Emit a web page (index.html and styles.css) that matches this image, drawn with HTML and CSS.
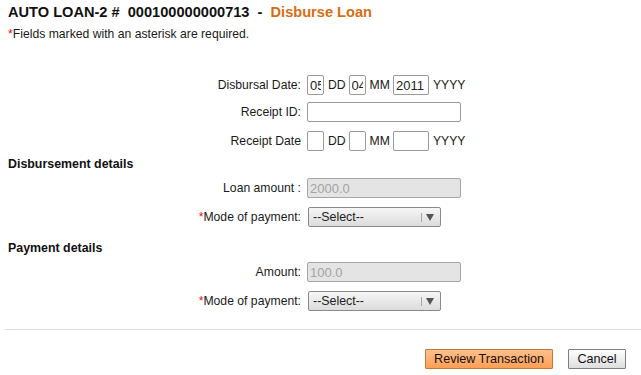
FILE: index.html
```html
<!DOCTYPE html>
<html lang="en">
<head>
    <meta charset="UTF-8">
    <title>Disburse Loan</title>
    <link rel="stylesheet" href="styles.css">
</head>
<body>

    <div class="container">
        <h1>AUTO LOAN-2 #&nbsp; 000100000000713&nbsp; -&nbsp; <span class="title-action">Disburse Loan</span></h1>
        <p class="note"><span class="req">*</span>Fields marked with an asterisk are required.</p>

        <div class="form-row first">
            <label>Disbursal Date:</label>
            <input type="text" class="date-day" value="05">
            <span class="unit">DD</span>
            <input type="text" class="date-day" value="04">
            <span class="unit">MM</span>
            <input type="text" class="date-year" value="2011">
            <span class="unit">YYYY</span>
        </div>
        <div class="form-row gap-7">
            <label for="receipt_id">Receipt ID:</label>
            <input type="text" id="receipt_id" class="wide">
        </div>
        <div class="form-row gap-9">
            <label>Receipt Date</label>
            <input type="text" class="date-day">
            <span class="unit">DD</span>
            <input type="text" class="date-day">
            <span class="unit">MM</span>
            <input type="text" class="date-year">
            <span class="unit">YYYY</span>
        </div>

        <h2 class="section first-section">Disbursement details</h2>
        <div class="form-row gap-7">
            <label>Loan amount :</label>
            <input type="text" class="wide" value="2000.0" disabled>
        </div>
        <div class="form-row gap-9">
            <label><span class="req">*</span>Mode of payment:</label>
            <span class="select-wrap">
                <select>
                    <option>--Select--</option>
                </select>
            </span>
        </div>

        <h2 class="section">Payment details</h2>
        <div class="form-row gap-7">
            <label>Amount:</label>
            <input type="text" class="wide" value="100.0" disabled>
        </div>
        <div class="form-row gap-9">
            <label><span class="req">*</span>Mode of payment:</label>
            <span class="select-wrap">
                <select>
                    <option>--Select--</option>
                </select>
            </span>
        </div>

        <hr class="divider">

        <div class="actions">
            <button class="btn-primary">Review Transaction</button>
            <button class="btn-cancel">Cancel</button>
        </div>
    </div>

</body>
</html>
```

FILE: styles.css
```css
body {
    font-family: "Liberation Sans", Arial, sans-serif;
    font-size: 12.2px;
    color: #1a1a1a;
    margin: 0;
    background: #fff;
}

.container {
    padding: 0 8px;
}

h1 {
    font-size: 14.6px;
    line-height: 18px;
    margin: 3px 0 0;
    color: #111;
}

.title-action {
    color: #d66d10;
}

.note {
    margin: 6px 0 0;
    line-height: 14px;
}

.req {
    color: #e4141b;
}

.form-row {
    display: flex;
    align-items: center;
    height: 20px;
}

.form-row.first {
    margin-top: 34px;
}

.gap-7 {
    margin-top: 7px;
}

.gap-9 {
    margin-top: 9px;
}

.form-row label {
    width: 293px;
    padding-right: 6px;
    text-align: right;
    flex-shrink: 0;
}

input[type="text"] {
    box-sizing: border-box;
    height: 20px;
    border: 1px solid #9a9a9a;
    border-radius: 2px;
    font-family: "Liberation Sans", Arial, sans-serif;
    font-size: 13px;
    padding: 0 2px;
    color: #222;
    background: #fff;
    margin: 0;
}

input.date-day {
    width: 17px;
}

input.date-year {
    width: 36px;
}

input.wide {
    width: 154px;
}

input[disabled] {
    background: #e4e4e4;
    border-color: #a6a6a6;
    color: #a3a3a3;
}

.unit {
    margin: 0 3px 0 4px;
}

.section {
    font-size: 12.4px;
    line-height: 14px;
    margin: 0;
    margin-top: 14px;
    color: #111;
}

.first-section {
    margin-top: 6px;
}

.select-wrap {
    position: relative;
    display: inline-block;
    margin-left: 1px;
}

.select-wrap select {
    appearance: none;
    -webkit-appearance: none;
    box-sizing: border-box;
    width: 133px;
    height: 20px;
    border: 1px solid #8a8a8a;
    border-radius: 2px;
    background: linear-gradient(#f6f6f6, #dcdcdc);
    font-family: "Liberation Sans", Arial, sans-serif;
    font-size: 12.4px;
    color: #222;
    padding: 0 0 0 4px;
    margin: 0;
}

.select-wrap::before {
    content: "";
    position: absolute;
    right: 19px;
    top: 6px;
    width: 1px;
    height: 9px;
    background: #a8a8a8;
}

.select-wrap::after {
    content: "";
    position: absolute;
    right: 7px;
    top: 7px;
    border-left: 4px solid transparent;
    border-right: 4px solid transparent;
    border-top: 7px solid #555;
}

.divider {
    border: none;
    border-top: 1px solid #d6dce2;
    margin: 18px -8px 0 -3px;
}

.actions {
    display: flex;
    justify-content: flex-end;
    gap: 15px;
    margin-top: 19px;
    padding-right: 7px;
}

button {
    box-sizing: border-box;
    height: 20px;
    font-family: "Liberation Sans", Arial, sans-serif;
    font-size: 12.6px;
    color: #111;
    padding: 0;
    cursor: pointer;
    border-radius: 1px;
}

.btn-primary {
    width: 128px;
    background: linear-gradient(#ffc08c, #ff9f55);
    border: 1px solid #c4793c;
}

.btn-cancel {
    width: 58px;
    background: linear-gradient(#ffffff, #dedede);
    border: 1px solid #7e7e7e;
}
```
